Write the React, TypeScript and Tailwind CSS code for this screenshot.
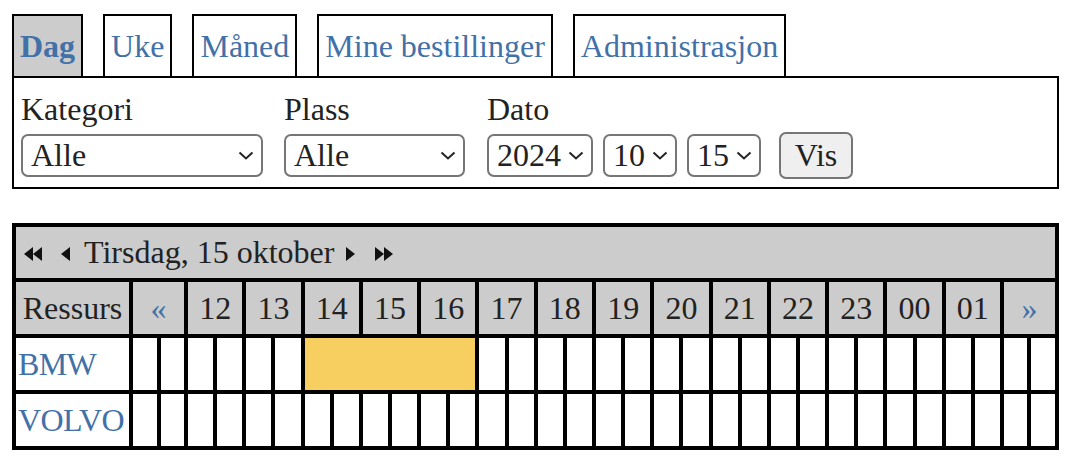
import React from 'react'

const hours = ['12', '13', '14', '15', '16', '17', '18', '19', '20', '21', '22', '23', '00', '01']
const tabs = ['Dag', 'Uke', 'Måned', 'Mine bestillinger', 'Administrasjon']

function Chevron() {
  return (
    <svg width="16" height="9" viewBox="0 0 16 9" fill="none">
      <path d="M1.5 1.5 L8 7.5 L14.5 1.5" stroke="#222" strokeWidth="2" />
    </svg>
  )
}

function Arrow({ dir, double }: { dir: 'l' | 'r'; double?: boolean }) {
  const w = double ? 18 : 9
  const pts =
    dir === 'l'
      ? double
        ? ['9,0 0,7 9,14', '18,0 9,7 18,14']
        : ['9,0 0,7 9,14']
      : double
        ? ['0,0 9,7 0,14', '9,0 18,7 9,14']
        : ['0,0 9,7 0,14']
  return (
    <svg width={w} height="14" viewBox={`0 0 ${w} 14`} className="mt-[2px]">
      {pts.map((p) => (
        <polygon key={p} points={p} fill="#111" />
      ))}
    </svg>
  )
}

function Select({ value, className }: { value: string; className: string }) {
  return (
    <div
      className={`flex h-[43px] items-center justify-between rounded-[7px] border-2 border-[#767676] bg-white pl-[8px] pr-[7px] ${className}`}
    >
      <span>{value}</span>
      <Chevron />
    </div>
  )
}

function BodyRow({ name, booked }: { name: string; booked?: boolean }) {
  const cells: React.ReactNode[] = []
  for (let i = 0; i < 32; i++) {
    if (booked && i === 6) {
      cells.push(<div key={i} className="col-span-6 bg-[#f7cf60]" />)
      i += 5
      continue
    }
    cells.push(<div key={i} className="bg-white" />)
  }
  return (
    <>
      <div className="flex h-[52px] items-center bg-white pl-[2px] tracking-[-0.6px] text-[#4271a8]">{name}</div>
      {cells}
    </>
  )
}

export default function App() {
  return (
    <div className="min-h-[464px] bg-white pl-[12px] pt-[14px] font-['Liberation_Serif',serif] text-[32px] leading-[37px] text-[#222]">
      <div className="flex gap-[20px]">
        {tabs.map((t, i) => (
          <div
            key={t}
            className={`border-2 border-b-0 border-black px-[6px] pb-[11px] pt-[12px] text-[#4271a8] ${i === 0 ? 'bg-[#cccccc] font-bold' : 'bg-white'}`}
          >
            {t}
          </div>
        ))}
      </div>

      <div className="h-[113px] w-[1047px] border-2 border-black pl-[7px] pt-[13px]">
        <div className="flex">
          <div>
            <div>Kategori</div>
            <Select value="Alle" className="mt-[6px] w-[242px]" />
          </div>
          <div className="ml-[21px]">
            <div>Plass</div>
            <Select value="Alle" className="mt-[6px] w-[181px]" />
          </div>
          <div className="ml-[22px]">
            <div>Dato</div>
            <div className="mt-[4px] flex items-center">
              <Select value="2024" className="w-[106px]" />
              <Select value="10" className="ml-[10px] w-[74px]" />
              <Select value="15" className="ml-[10px] w-[74px]" />
              <button className="ml-[18px] h-[47px] w-[74px] rounded-[7px] border-2 border-[#767676] bg-[#efefef] text-[#222]">
                Vis
              </button>
            </div>
          </div>
        </div>
      </div>

      <div className="mt-[34px] grid w-[1047px] grid-cols-[113px_repeat(2,23.5px)_repeat(28,minmax(0,1fr))_repeat(2,23.5px)] gap-[4px] bg-black p-[4px]">
        <div className="col-span-full flex h-[51px] items-center bg-[#cccccc] pl-[8px]">
          <Arrow dir="l" double />
          <span className="ml-[19px]">
            <Arrow dir="l" />
          </span>
          <span className="ml-[14px]">Tirsdag, 15 oktober</span>
          <span className="ml-[12px]">
            <Arrow dir="r" />
          </span>
          <span className="ml-[20px]">
            <Arrow dir="r" double />
          </span>
        </div>

        <div className="flex h-[52px] items-center justify-center bg-[#cccccc]">Ressurs</div>
        <div className="col-span-2 flex items-center justify-center bg-[#cccccc] text-[#4271a8]">«</div>
        {hours.map((h) => (
          <div key={h} className="col-span-2 flex items-center justify-center bg-[#cccccc]">
            {h}
          </div>
        ))}
        <div className="col-span-2 flex items-center justify-center bg-[#cccccc] text-[#4271a8]">»</div>

        <BodyRow name="BMW" booked />
        <BodyRow name="VOLVO" />
      </div>
    </div>
  )
}
